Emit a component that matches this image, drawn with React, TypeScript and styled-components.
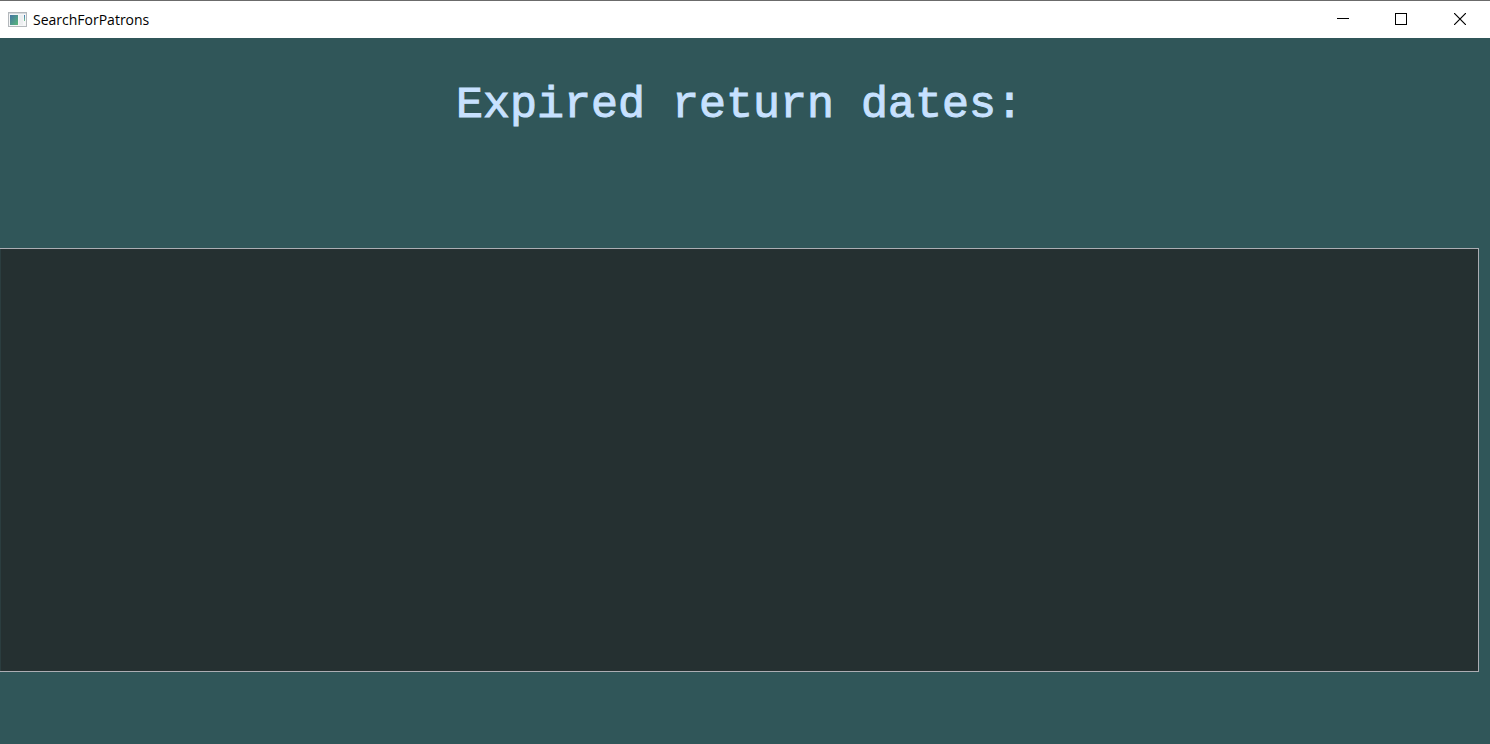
import React from "react";
import styled, { createGlobalStyle } from "styled-components";

const GlobalStyle = createGlobalStyle`
  * { box-sizing: border-box; }
  body { margin: 0; background: #305659; }
`;

const Window = styled.div`
  display: flex;
  flex-direction: column;
  min-height: 100vh;
  background: #305659;
`;

const TitleBar = styled.header`
  display: flex;
  align-items: center;
  height: 38px;
  padding-left: 8px;
  border-top: 1px solid #6b6b6b;
  background: #ffffff;
`;

const WindowTitle = styled.span`
  flex: 1;
  padding-left: 6px;
  color: #000000;
  font: 14px/20px "Segoe UI", "Open Sans", "Noto Sans", sans-serif;
`;

const Controls = styled.div`
  display: flex;
  align-self: stretch;
`;

const ControlButton = styled.button<{ $wide?: boolean }>`
  display: flex;
  align-items: center;
  justify-content: center;
  width: ${(p) => (p.$wide ? 60 : 58)}px;
  padding: 0 0 2px;
  border: 0;
  background: transparent;
  color: #000000;

  &:hover { background: #e5e5e5; }
`;

const Content = styled.main`
  display: flex;
  flex: 1;
  flex-direction: column;
  padding: 42px 11px 72px 0;
`;

const Heading = styled.h1`
  margin: 0 0 116px;
  color: #c7e1ff;
  text-align: center;
  font: 400 45px/52px "Lucida Console", "Liberation Mono", monospace;
  -webkit-text-stroke: 1px #c7e1ff;
`;

const ResultsGrid = styled.section`
  flex: 1;
  min-height: 120px;
  border: 1px solid #abadb3;
  border-left: 0;
  background: #253031;
  box-shadow: inset 1px 0 #2b3d3f;
`;

function AppIcon() {
  return (
    <svg width="19" height="16" viewBox="0 0 19 16" aria-hidden="true">
      <defs>
        <linearGradient id="pane" x1="0" y1="0" x2="1" y2="1">
          <stop offset="0" stopColor="#4474a4" />
          <stop offset="1" stopColor="#58b878" />
        </linearGradient>
        <linearGradient id="strip" x1="0" y1="0" x2="0" y2="1">
          <stop offset="0" stopColor="#3f78b8" />
          <stop offset="1" stopColor="#74c48c" />
        </linearGradient>
      </defs>
      <rect x="0.5" y="0.5" width="18" height="14" fill="#f5f6f7" stroke="#b4b8bc" />
      <rect x="1" y="1" width="17" height="1" fill="#d5d9dd" />
      <rect x="2" y="3" width="8" height="10" fill="url(#pane)" />
      <rect x="11" y="3" width="4" height="10" fill="#eceef0" />
      <rect x="16" y="3" width="1" height="6" fill="url(#strip)" />
    </svg>
  );
}

export default function App() {
  return (
    <Window>
      <GlobalStyle />
      <TitleBar>
        <AppIcon />
        <WindowTitle>SearchForPatrons</WindowTitle>
        <Controls>
          <ControlButton aria-label="Minimize">
            <svg width="12" height="12" viewBox="0 0 12 12">
              <path d="M0 5.5H12" stroke="currentColor" />
            </svg>
          </ControlButton>
          <ControlButton aria-label="Maximize">
            <svg width="12" height="12" viewBox="0 0 12 12">
              <rect x="0.5" y="0.5" width="11" height="11" fill="none" stroke="currentColor" />
            </svg>
          </ControlButton>
          <ControlButton aria-label="Close" $wide>
            <svg width="12" height="12" viewBox="0 0 12 12">
              <path d="M0 0L12 12M12 0L0 12" stroke="currentColor" strokeWidth="1.2" />
            </svg>
          </ControlButton>
        </Controls>
      </TitleBar>
      <Content>
        <Heading>Expired return dates:</Heading>
        <ResultsGrid aria-label="Expired return dates" />
      </Content>
    </Window>
  );
}
